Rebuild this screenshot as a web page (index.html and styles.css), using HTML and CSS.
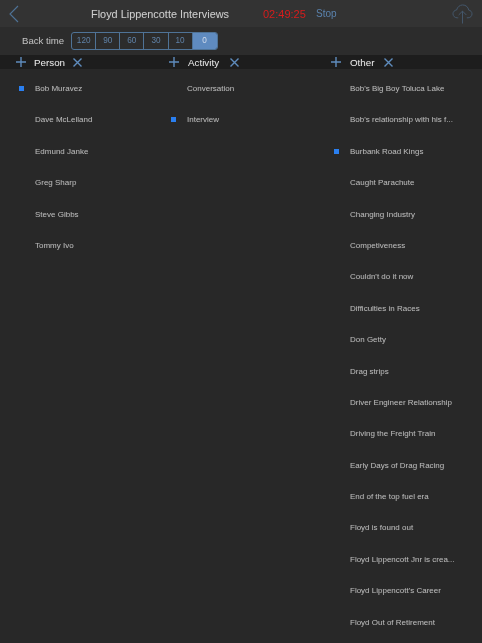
FILE: index.html
```html
<!DOCTYPE html>
<html>
<head>
<meta charset="utf-8">
<title>Floyd Lippencotte Interviews</title>
<link rel="stylesheet" href="styles.css">
</head>
<body>
<div class="page">
  <header class="navbar">
    <svg class="back" width="12" height="18" viewBox="0 0 12 18"><path d="M10 1 2 9l8 8" fill="none" stroke="#4f7397" stroke-width="1.100"/></svg>
    <div class="title">Floyd Lippencotte Interviews</div>
    <div class="clock">02:49:25</div>
    <div class="stop">Stop</div>
    <svg class="cloud" width="21" height="20" viewBox="0 0 22 21"><path d="M6.500 14.500H5.500C3 14.500 1 12.700 1 10.300 1 8.200 2.600 6.500 4.800 6.300 5.600 3.200 8.100 1 11.200 1c3.300 0 5.900 2.300 6.300 5.400 2 .3 3.500 1.900 3.500 4 0 2.300-1.800 4.100-4.200 4.100H15.500" fill="none" stroke="#44596e" stroke-width="1"/><path d="M11 20.500V7.500M7 11.500l4-4 4 4" fill="none" stroke="#44596e" stroke-width="1"/></svg>
  </header>
  <div class="backbar">
    <span class="backlabel">Back time</span>
    <div class="segments">
      <span class="seg">120</span><span class="seg">90</span><span class="seg">60</span><span class="seg">30</span><span class="seg">10</span><span class="seg active">0</span>
    </div>
  </div>
  <div class="columns">
    <section class="col col-person">
      <div class="colhead">
        <svg class="plus" width="10" height="10" viewBox="0 0 10 10"><path d="M5 0v10M0 5h10"/></svg>
        <span class="colname">Person</span>
        <svg class="cross" width="9" height="9" viewBox="0 0 9 9"><path d="M.5.500l8 8M8.500.500l-8 8"/></svg>
      </div>
      <ul class="list">
        <li class="sel">Bob Muravez</li>
        <li>Dave McLelland</li>
        <li>Edmund Janke</li>
        <li>Greg Sharp</li>
        <li>Steve Gibbs</li>
        <li>Tommy Ivo</li>
      </ul>
    </section>
    <section class="col col-activity">
      <div class="colhead">
        <svg class="plus" width="10" height="10" viewBox="0 0 10 10"><path d="M5 0v10M0 5h10"/></svg>
        <span class="colname">Activity</span>
        <svg class="cross" width="9" height="9" viewBox="0 0 9 9"><path d="M.5.500l8 8M8.500.500l-8 8"/></svg>
      </div>
      <ul class="list">
        <li>Conversation</li>
        <li class="sel">Interview</li>
      </ul>
    </section>
    <section class="col col-other">
      <div class="colhead">
        <svg class="plus" width="10" height="10" viewBox="0 0 10 10"><path d="M5 0v10M0 5h10"/></svg>
        <span class="colname">Other</span>
        <svg class="cross" width="9" height="9" viewBox="0 0 9 9"><path d="M.5.500l8 8M8.500.500l-8 8"/></svg>
      </div>
      <ul class="list">
        <li>Bob's Big Boy Toluca Lake</li>
        <li>Bob's relationship with his f...</li>
        <li class="sel">Burbank Road Kings</li>
        <li>Caught Parachute</li>
        <li>Changing Industry</li>
        <li>Competiveness</li>
        <li>Couldn't do it now</li>
        <li>Difficulties in Races</li>
        <li>Don Getty</li>
        <li>Drag strips</li>
        <li>Driver Engineer Relationship</li>
        <li>Driving the Freight Train</li>
        <li>Early Days of Drag Racing</li>
        <li>End of the top fuel era</li>
        <li>Floyd is found out</li>
        <li>Floyd Lippencott Jnr is crea...</li>
        <li>Floyd Lippencott's Career</li>
        <li>Floyd Out of Retirement</li>
      </ul>
    </section>
  </div>
</div>
</body>
</html>
```
FILE: styles.css
```css
* { box-sizing: border-box; }
html, body { margin: 0; padding: 0; }
body { background: #282828; font-family: "Liberation Sans", Arial, sans-serif; overflow: hidden; }
.page { width: 482px; height: 643px; overflow: hidden; display: flex; flex-direction: column; will-change: transform; text-shadow: 0 0 1px rgba(200, 200, 200, 0.25); }
.navbar { height: 27px; flex: none; display: flex; align-items: center; background: #333333; padding-left: 8px; }
.back { flex: none; margin-right: 71px; }
.title { font-size: 10.900px; color: #cccccc; width: 172px; flex: none; }
.clock { font-size: 11px; color: #d81c1c; width: 53px; flex: none; text-shadow: none; }
.stop { font-size: 10px; color: #5a82ad; flex: none; text-shadow: none; }
.cloud { flex: none; margin-left: 115px; }
.backbar { height: 28px; flex: none; display: flex; align-items: center; background: #2c2c2c; padding-left: 22px; padding-bottom: 1px; }
.backlabel { font-size: 9.600px; color: #bcbcbc; margin-right: 7px; }
.segments { display: flex; height: 18px; border: 1px solid #4f7397; border-radius: 3px; overflow: hidden; text-shadow: none; }
.seg { width: 24.100px; font-size: 8.200px; color: #5f82a8; display: flex; align-items: center; justify-content: center; border-right: 1px solid #4f7397; }
.seg.active { background: #5f8bc0; color: #d3dded; border-right: 0; }
.columns { flex: 1; display: flex; align-items: flex-start; background: #282828; }
.col { flex: none; }
.col-person { width: 152px; }
.col-activity { width: 163px; }
.col-other { width: 167px; }
.colhead { height: 14px; background: #1d1d1d; display: flex; align-items: center; }
.col-person .colhead { padding-left: 16px; }
.col-activity .colhead { padding-left: 17px; }
.col-other .colhead { padding-left: 16px; }
.plus path, .cross path { fill: none; stroke: #5f8cbd; stroke-width: 1.400; }
.plus { flex: none; margin-right: 8px; }
.col-activity .plus, .col-other .plus { margin-right: 9px; }
.colname { font-size: 9.800px; color: #e6e6e6; flex: none; }
.cross { flex: none; margin-left: 8px; }
.col-activity .cross { margin-left: 11px; }
.col-other .cross { margin-left: 9px; }
.list { list-style: none; margin: 0; padding: 4px 0 0 0; }
.list li { height: 31.400px; line-height: 31.400px; font-size: 8px; color: #b6b6b6; white-space: nowrap; position: relative; padding-left: 35px; }
.list li.sel::before { content: ""; position: absolute; width: 5px; height: 5px; background: #2a7ff0; top: 13px; left: 19px; }
```
